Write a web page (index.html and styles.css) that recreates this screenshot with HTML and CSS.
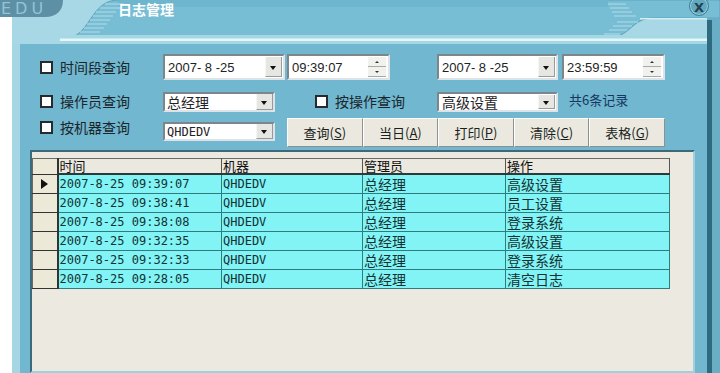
FILE: index.html
```html
<!DOCTYPE html>
<html lang="zh-CN">
<head>
  <meta charset="UTF-8">
  <title>日志管理</title>
  <link rel="stylesheet" href="styles.css">
</head>
<body>
  <!-- Title Bar -->
  <div class="titlebar">
    <svg class="title-art" width="720" height="44" viewBox="0 0 720 44">
      <rect width="720" height="44" fill="#a8d8e5"/>
      <rect x="0" y="17" width="12" height="27" fill="#ffffff"/>
      <path d="M0 0 H63 C63 10 57 17 45 17 H0 Z" fill="#5e90a5"/>
      <path d="M66 38 C90 38 90 0 118 0 H720 V18 H654 C630 18 632 38 606 38 Z" fill="#77bed5" stroke="#5da3bb" stroke-width="1"/>
      <rect x="118" y="0" width="490" height="7" fill="#6eb6cd"/>
      <g stroke="#a3d4e2" stroke-width="1.4">
        <line x1="105" y1="4" x2="124" y2="4"/>
        <line x1="100" y1="8" x2="120" y2="8"/>
        <line x1="96" y1="12" x2="116" y2="12"/>
        <line x1="93" y1="16" x2="113" y2="16"/>
        <line x1="90" y1="20" x2="110" y2="20"/>
        <line x1="87" y1="24" x2="107" y2="24"/>
        <line x1="84" y1="28" x2="104" y2="28"/>
        <line x1="80" y1="32" x2="100" y2="32"/>
        <line x1="608" y1="4" x2="626" y2="4"/>
        <line x1="610" y1="8" x2="629" y2="8"/>
        <line x1="612" y1="12" x2="632" y2="12"/>
        <line x1="614" y1="16" x2="636" y2="16"/>
        <line x1="617" y1="22" x2="638" y2="22"/>
        <line x1="613" y1="26" x2="632" y2="26"/>
        <line x1="609" y1="30" x2="627" y2="30"/>
        <line x1="604" y1="34" x2="620" y2="34"/>
      </g>
      <rect x="60" y="35" width="648" height="9" fill="#a6d7e4"/>
      <rect x="60" y="38.5" width="648" height="2.5" fill="#e4f7fa"/>
      <rect x="640" y="18" width="68" height="1.5" fill="#d2eef5"/>
      <rect x="707" y="18" width="13" height="26" fill="#6aaec5"/>
      <rect x="707" y="20" width="5" height="24" fill="#2f6b80"/>
    </svg>
    <span class="edu">EDU</span>
    <span class="title">日志管理</span>
    <span class="close">X</span>
  </div>

  <div class="shell">
    <div class="frame">
      <!-- Query Controls -->
      <div class="controls">
        <label class="check"><span class="box"></span>时间段查询</label>
        <div class="combo date"><span class="val">2007- 8 -25</span><span class="drop"></span></div>
        <div class="spin"><span class="val">09:39:07</span><span class="arrows"><i class="up"></i><i class="down"></i></span></div>
        <div class="combo date2"><span class="val">2007- 8 -25</span><span class="drop"></span></div>
        <div class="spin"><span class="val">23:59:59</span><span class="arrows"><i class="up"></i><i class="down"></i></span></div>

        <label class="check"><span class="box"></span>操作员查询</label>
        <div class="combo short"><span class="val cjk">总经理</span><span class="drop"></span></div>
        <label class="check op"><span class="box"></span>按操作查询</label>
        <div class="combo date2 low"><span class="val cjk">高级设置</span><span class="drop"></span></div>
        <div class="count">共6条记录</div>

        <label class="check last"><span class="box"></span>按机器查询</label>
        <div class="combo short last-combo"><span class="val mono">QHDEDV</span><span class="drop"></span></div>
        <div class="buttons">
          <button>查询(<u>S</u>)</button>
          <button>当日(<u>A</u>)</button>
          <button>打印(<u>P</u>)</button>
          <button>清除(<u>C</u>)</button>
          <button>表格(<u>G</u>)</button>
        </div>
      </div>

      <!-- Log Grid -->
      <div class="grid-area">
        <table class="log">
          <colgroup>
            <col class="c-ind"><col class="c-time"><col class="c-host"><col class="c-user"><col class="c-op">
          </colgroup>
          <thead>
            <tr><th class="ind"></th><th>时间</th><th>机器</th><th>管理员</th><th>操作</th></tr>
          </thead>
          <tbody>
            <tr><td class="ind"><span class="arrow"></span></td><td class="mono">2007-8-25 09:39:07</td><td class="mono">QHDEDV</td><td>总经理</td><td>高级设置</td></tr>
            <tr><td class="ind"></td><td class="mono">2007-8-25 09:38:41</td><td class="mono">QHDEDV</td><td>总经理</td><td>员工设置</td></tr>
            <tr><td class="ind"></td><td class="mono">2007-8-25 09:38:08</td><td class="mono">QHDEDV</td><td>总经理</td><td>登录系统</td></tr>
            <tr><td class="ind"></td><td class="mono">2007-8-25 09:32:35</td><td class="mono">QHDEDV</td><td>总经理</td><td>高级设置</td></tr>
            <tr><td class="ind"></td><td class="mono">2007-8-25 09:32:33</td><td class="mono">QHDEDV</td><td>总经理</td><td>登录系统</td></tr>
            <tr><td class="ind"></td><td class="mono">2007-8-25 09:28:05</td><td class="mono">QHDEDV</td><td>总经理</td><td>清空日志</td></tr>
          </tbody>
        </table>
      </div>
    </div>
  </div>
</body>
</html>
```

FILE: styles.css
```css
body {
  margin: 0;
  width: 720px;
  height: 373px;
  overflow: hidden;
  background: #ffffff;
  font-family: "Noto Sans CJK SC", sans-serif;
  font-size: 14px;
  color: #1c262b;
}

/* Title bar */
.titlebar {
  position: relative;
  height: 44px;
  display: flex;
  align-items: flex-start;
  overflow: hidden;
}

.title-art {
  position: absolute;
  top: 0;
  left: 0;
}

.edu,
.title,
.close {
  position: relative;
}

.edu {
  width: 62px;
  padding-left: 1px;
  font-family: "DejaVu Sans", sans-serif;
  font-size: 16px;
  line-height: 17px;
  letter-spacing: 4px;
  color: #93c3d5;
}

.title {
  margin-left: 55px;
  padding-top: 1px;
  font-size: 14px;
  line-height: 16px;
  font-weight: bold;
  color: #ffffff;
}

.close {
  margin-left: auto;
  margin-right: 11px;
  margin-top: -4px;
  width: 18px;
  height: 18px;
  border-radius: 50%;
  background: #62a9c0;
  border: 1px solid #3e7f95;
  box-shadow: inset 0 0 0 1px #9fd0df;
  font-family: "DejaVu Sans", sans-serif;
  font-weight: bold;
  font-size: 13px;
  line-height: 22px;
  text-align: center;
  color: #23414d;
}

/* Window body */
.shell {
  margin-left: 12px;
  padding-right: 8px;
  height: 329px;
  display: flex;
  background: #6aaec5;
}

.frame {
  flex: 1;
  display: flex;
  flex-direction: column;
  background: #70b7cf;
  border-left: 8px solid #a6d6e3;
  border-right: 5px solid #2f6b80;
}

/* Query controls */
.controls {
  display: grid;
  grid-template-columns: 123px 124px 150px 125px 103px;
  grid-template-rows: 34px 34px 32px;
  align-items: center;
  padding: 6px 0 0 20px;
}

.check {
  display: flex;
  align-items: center;
  font-size: 14px;
  line-height: 16px;
  color: #1a252b;
}

.check .box {
  width: 9px;
  height: 9px;
  margin-right: 7px;
  background: #ffffff;
  border: 2px solid #262b2e;
}

.check.op {
  margin-left: 28px;
}

.check.last {
  align-self: start;
  margin-top: 1px;
}

.combo,
.spin {
  display: flex;
  align-items: stretch;
  background: #ffffff;
  border: 2px solid;
  border-color: #7c878c #dde3e6 #dde3e6 #7c878c;
  box-sizing: border-box;
}

.combo .val,
.spin .val {
  flex: 1;
  padding-left: 2px;
  font-family: "Liberation Sans", sans-serif;
  font-size: 13px;
  display: flex;
  align-items: center;
  color: #1e2326;
  white-space: pre;
}

.combo .val.cjk {
  font-family: "Noto Sans CJK SC", sans-serif;
  font-size: 14px;
}

.val.mono,
.mono {
  font-family: "DejaVu Sans Mono", monospace;
  font-size: 12px;
}

.combo.date {
  width: 122px;
  height: 26px;
  padding: 1px;
}

.combo.date2 {
  width: 121px;
  height: 26px;
  padding: 1px;
}

.combo.low {
  height: 20px;
  margin-top: 2px;
}

.combo.short {
  width: 112px;
  height: 20px;
  margin-top: 2px;
}

.combo.last-combo {
  align-self: start;
  margin-top: 4px;
  height: 19px;
}

.drop {
  width: 15px;
  position: relative;
  background: #e6e6e2;
  border-left: 1px solid #f6f6f4;
  border-right: 1px solid #9a9a96;
  border-bottom: 1px solid #9a9a96;
}

.drop::after {
  content: "";
  position: absolute;
  left: 4px;
  top: 50%;
  margin-top: -1px;
  border-left: 3.5px solid transparent;
  border-right: 3.5px solid transparent;
  border-top: 4px solid #111111;
}

.spin {
  width: 103px;
  height: 26px;
  padding: 1px 2px 1px 1px;
}

.arrows {
  width: 18px;
  display: flex;
  flex-direction: column;
}

.arrows i {
  flex: 1;
  position: relative;
  background: #f1f1ee;
  border-bottom: 1px solid #a8aaa8;
}

.arrows i::after {
  content: "";
  position: absolute;
  left: 7px;
  top: 4px;
  border-left: 2px solid transparent;
  border-right: 2px solid transparent;
}

.arrows .up::after {
  border-bottom: 2px solid #333333;
}

.arrows .down::after {
  border-top: 2px solid #333333;
}

.count {
  margin-left: 7px;
  margin-bottom: 4px;
  font-size: 13px;
  color: #17365f;
}

.buttons {
  grid-column: 3 / 6;
  align-self: start;
  display: flex;
  height: 29px;
}

.buttons button {
  flex: 1;
  margin: 0;
  padding: 0;
  background: #ebe9df;
  border: 1px solid;
  border-color: #ffffff #8d908c #8d908c #ffffff;
  font-family: "Noto Sans CJK SC", sans-serif;
  font-size: 13px;
  color: #1b1f22;
}

/* Log grid */
.grid-area {
  flex: 1;
  margin: 0 12px 0 10px;
  padding-top: 6px;
  background: #ece9e1;
  border: 2px solid;
  border-color: #3d6a7a #9fd0df #9fd0df #3d6a7a;
}

.log {
  border-collapse: collapse;
  table-layout: fixed;
  width: 637px;
}

.c-ind { width: 25px; }
.c-time { width: 164px; }
.c-host { width: 141px; }
.c-user { width: 143px; }
.c-op { width: 164px; }

.log th {
  height: 14px;
  padding: 0 0 0 1px;
  text-align: left;
  font-weight: normal;
  font-size: 13px;
  line-height: 14px;
  color: #111111;
  background: #ebe8df;
  border-top: 1px solid #6b6b66;
  border-right: 1px solid #555555;
  border-bottom: 2px solid #2e3a3a;
  white-space: nowrap;
}

.log td {
  height: 18px;
  padding: 0 0 0 1px;
  font-size: 14px;
  line-height: 18px;
  color: #123232;
  background: #82f4f6;
  border-right: 1px solid #2f7c7e;
  border-bottom: 1px solid #2f7c7e;
  white-space: nowrap;
}

.log td.mono {
  font-size: 12px;
}

.log .ind {
  background: #ece9d8;
  border-left: 1px solid #6b6b66;
  border-right: 2px solid #333333;
  border-bottom: 1px solid #333333;
}

.arrow {
  display: block;
  margin-left: 7px;
  width: 0;
  height: 0;
  border-top: 5px solid transparent;
  border-bottom: 5px solid transparent;
  border-left: 7px solid #111111;
}
```
